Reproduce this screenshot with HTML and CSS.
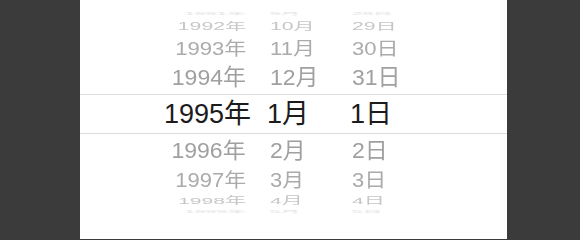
FILE: index.html
```html
<!DOCTYPE html>
<html lang="zh-CN">
<head>
<meta charset="utf-8">
<title>日期选择</title>
<link rel="stylesheet" href="styles.css">
</head>
<body>
<div class="panel">
  <div class="picker">
    <div class="row t4"><span class="y"><i>1991年</i></span><span class="m"><i>9月</i></span><span class="d"><i>28日</i></span></div>
    <div class="row t3"><span class="y"><i>1992年</i></span><span class="m"><i>10月</i></span><span class="d"><i>29日</i></span></div>
    <div class="row t2"><span class="y"><i>1993年</i></span><span class="m"><i>11月</i></span><span class="d"><i>30日</i></span></div>
    <div class="row t1"><span class="y"><i>1994年</i></span><span class="m"><i>12月</i></span><span class="d"><i>31日</i></span></div>
    <div class="row sel"><span class="y"><i>1995年</i></span><span class="m"><i>1月</i></span><span class="d"><i>1日</i></span></div>
    <div class="row b1"><span class="y"><i>1996年</i></span><span class="m"><i>2月</i></span><span class="d"><i>2日</i></span></div>
    <div class="row b2"><span class="y"><i>1997年</i></span><span class="m"><i>3月</i></span><span class="d"><i>3日</i></span></div>
    <div class="row b3"><span class="y"><i>1998年</i></span><span class="m"><i>4月</i></span><span class="d"><i>4日</i></span></div>
    <div class="row b4"><span class="y"><i>1999年</i></span><span class="m"><i>5月</i></span><span class="d"><i>5日</i></span></div>
  </div>
</div>
</body>
</html>
```
FILE: styles.css
```css
html, body {
  margin: 0;
  padding: 0;
  height: 239px;
  overflow: hidden;
  background: #3b3b3b;
}

.panel {
  margin-left: 80px;
  width: 427px;
  height: 239px;
  background: #ffffff;
  font-family: "Liberation Sans", "Noto Sans CJK SC", sans-serif;
}

.picker {
  padding-top: 11px;
  display: flex;
  flex-direction: column;
}

.row {
  display: grid;
  grid-template-columns: 171px 67px 1fr;
  column-gap: 16px;
  align-items: center;
  color: #a0a0a0;
}

.row span {
  display: flex;
  align-items: center;
  height: 100%;
}

.row i {
  font-style: normal;
  line-height: 1;
  white-space: nowrap;
  display: inline-block;
}

.row .y {
  justify-content: flex-end;
  padding-right: 5px;
}
.row .y i { transform-origin: right center; }

.row .m { padding-left: 3px; }
.row .d { padding-left: 2px; }
.row .m i, .row .d i { transform-origin: left center; }

/* selected band */
.row.sel {
  height: 38px;
  border-top: 1px solid #dcdcdc;
  border-bottom: 1px solid #dcdcdc;
  font-size: 27px;
  color: #1c1c1c;
}
.row.sel .y { padding-right: 0; }
.row.sel .m { padding-left: 0; }
.row.sel .d { padding-left: 0; }

/* rows above: font-size gives the squashed height, scaleX restores the width */
.t1 { height: 32px; font-size: 22.3px; }
.t1 i { transform: scaleX(1.03); }

.t2 { height: 26px; font-size: 18.4px; color: #ababab; }
.t2 i { transform: scaleX(1.2); }

.t3 { height: 19px; font-size: 10.6px; color: #c6c6c6; }
.t3 i { transform: scaleX(2); filter: blur(0.3px); }

.t4 { height: 6px; font-size: 6px; color: #dcdcdc; }
.t4 i { transform: scale(3.2, 0.58); filter: blur(0.4px); }

/* rows below */
.b1 { height: 34px; font-size: 21.6px; }
.b1 i { transform: scaleX(1.065); }

.b2 { height: 25px; font-size: 19.3px; color: #ababab; }
.b2 i { transform: scaleX(1.14); }

.b3 { height: 16px; font-size: 9.7px; color: #c6c6c6; }
.b3 i { transform: scaleX(2.18); filter: blur(0.3px); }

.b4 { height: 5px; font-size: 6px; color: #dcdcdc; }
.b4 i { transform: scale(3.2, 0.58); filter: blur(0.4px); }
```
